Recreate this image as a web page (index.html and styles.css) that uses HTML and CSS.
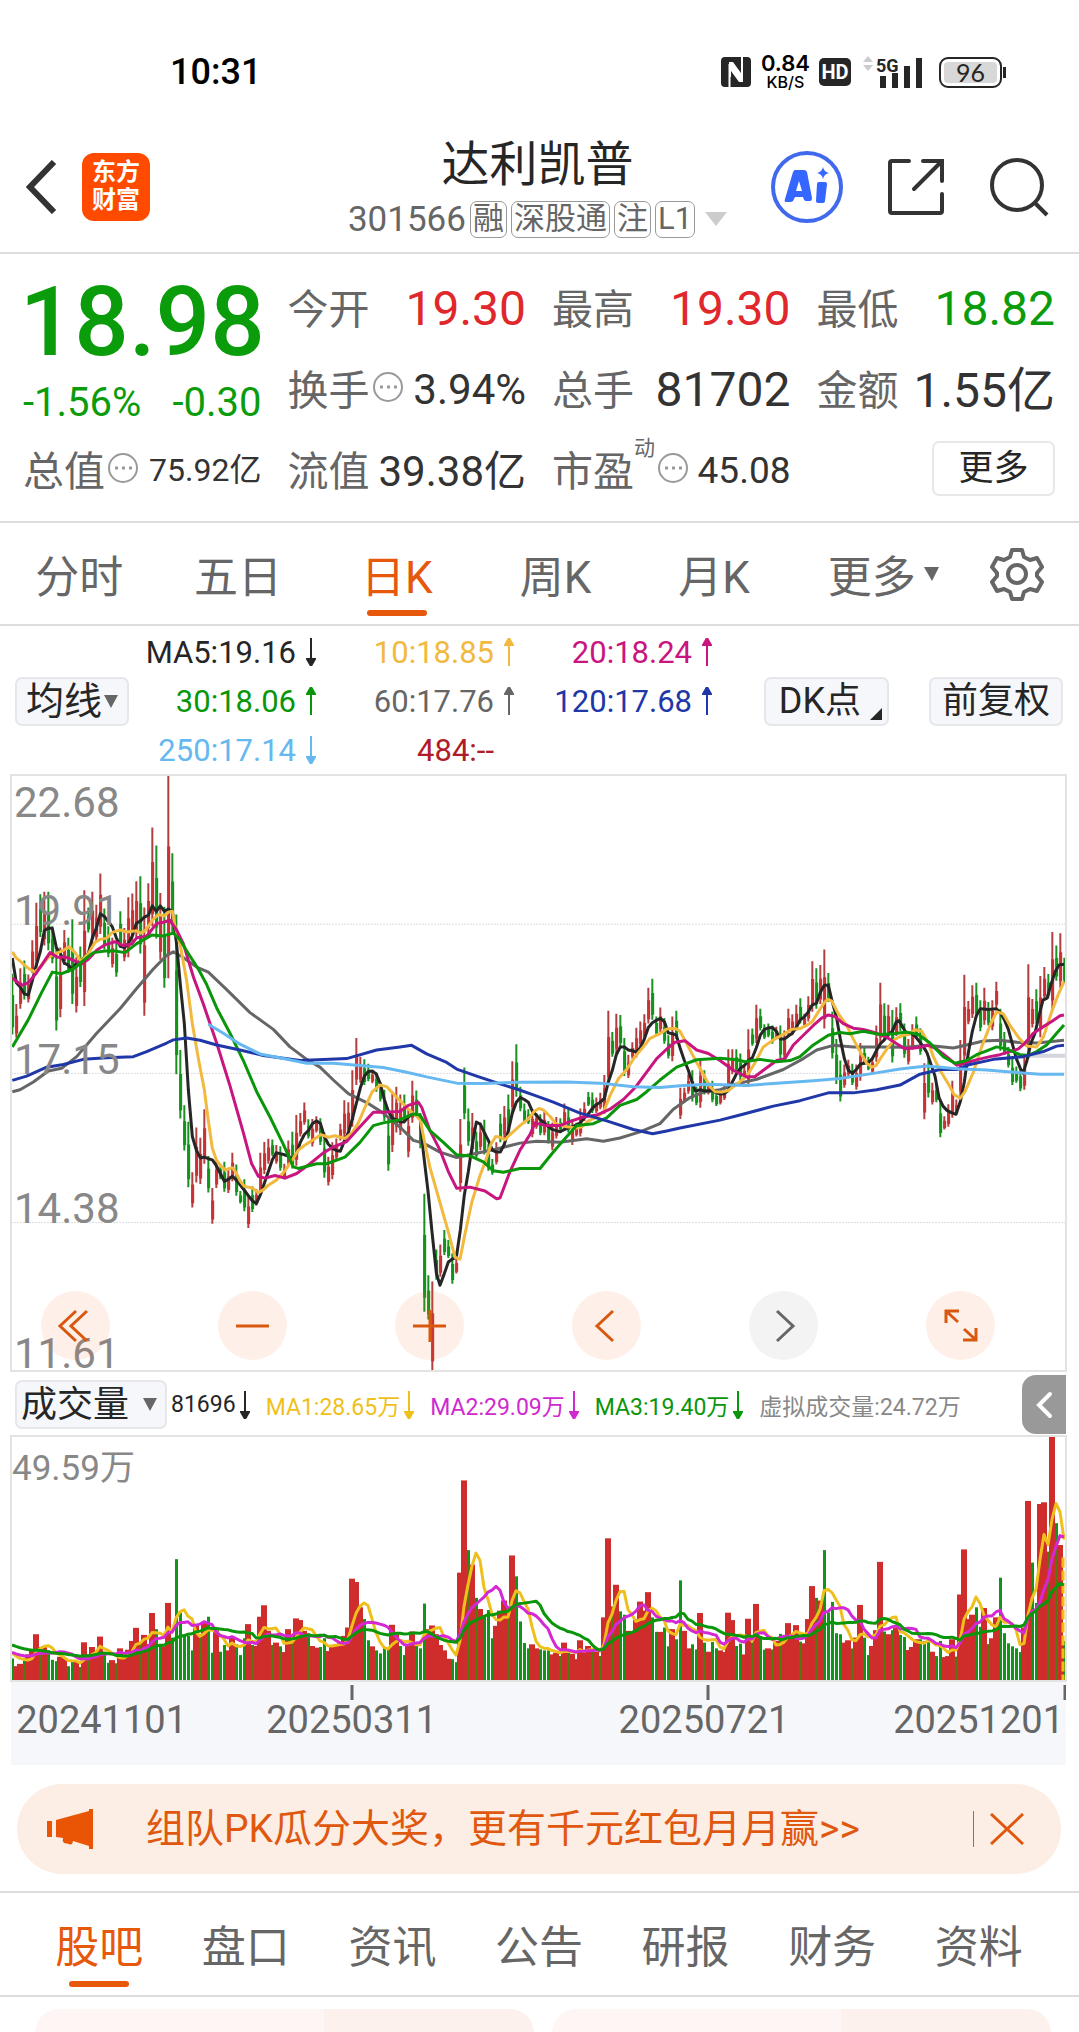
FILE: index.html
```html
<!DOCTYPE html>
<html lang="zh-CN">
<head>
<meta charset="utf-8">
<meta name="viewport" content="width=device-width, initial-scale=1">
<title>达利凯普 301566</title>
<link rel="stylesheet" href="styles.css">
</head>
<body>
<div class="status">
  <span class="clock">10:31</span>
  <div class="status-icons">
    <svg class="nfc" width="30" height="30" viewBox="0 0 30 30"><rect width="30" height="30" rx="4" fill="#262626"/><path d="M8.500 30V7M21 0v22" fill="none" stroke="#fff" stroke-width="2"/><path d="M8 5l4 0 8 11V11l2 0v14h-4L10 14v6H8z" fill="#fff"/></svg>
    <span class="speed"><b>0.84</b><small>KB/S</small></span>
    <span class="hd">HD</span>
    <svg class="signal" width="62" height="36" viewBox="0 0 62 36"><path d="M0 8l5-6 5 6zM0 11h10l-5 6z" fill="#ccc"/><text x="13" y="18" class="sig-text">5G</text><path d="M17 22h6v12h-6zM29 19h6v15h-6zM41 12h6v22h-6zM53 4h6v30h-6z" fill="#262626"/></svg>
    <span class="battery">96</span>
  </div>
</div>

<header class="header">
  <div class="head-left">
    <button class="plain" aria-label="返回"><svg width="31" height="54" viewBox="0 0 31 54"><path d="M28 2L4 27l24 25" fill="none" stroke="#333" stroke-width="6"/></svg></button>
    <a class="logo" href="#">东方<br>财富</a>
  </div>
  <div class="head-title">
    <h1>达利凯普</h1>
    <div class="code"><span>301566</span><i>融</i><i>深股通</i><i>注</i><i>L1</i><svg width="22" height="14" viewBox="0 0 22 14"><path d="M0 0h22L11 14z" fill="#ccc"/></svg></div>
  </div>
  <div class="head-right">
    <button class="plain" aria-label="AI"><svg width="72" height="72" viewBox="0 0 72 72"><circle cx="36" cy="36" r="34" fill="#fff" stroke="#4169ec" stroke-width="4"/><path fill="#3566ff" fill-rule="evenodd" d="M24 19h9q2 0 3 2l5 26q0 3-2 3h-4q-2 0-3-4h-8l-2 4q-1 1-3 1h-4q-2 0-1-3l8-27q1-2 2-2zM28 30l-3 10h6zM48 31h6q2 0 2 2l-2 17q0 2-2 2h-5q-2 0-2-2l1-17q0-2 2-2zM52 16q1 5 6 6-5 1-6 6-1-5-6-6 5-1 6-6z"/></svg></button>
    <button class="plain" aria-label="分享"><svg width="58" height="58" viewBox="0 0 58 58"><path d="M22 3H5q-2 0-2 2v48q0 2 2 2h48q2 0 2-2V36M36 3h19v20M55 3L27 31" fill="none" stroke="#333" stroke-width="4" stroke-linecap="round"/></svg></button>
    <button class="plain" aria-label="搜索"><svg width="60" height="60" viewBox="0 0 60 60"><circle cx="28" cy="28" r="25" fill="none" stroke="#333" stroke-width="4"/><path d="M46 46l12 12" stroke="#333" stroke-width="4"/></svg></button>
  </div>
</header>

<section class="quote">
  <div class="price-box green">
    <strong>18.98</strong>
    <div class="change"><span>-1.56%</span><span>-0.30</span></div>
  </div>
  <div class="item"><span>今开</span><b class="v48 red">19.30</b></div>
  <div class="item"><span>最高</span><b class="v48 red">19.30</b></div>
  <div class="item"><span>最低</span><b class="v48 green">18.82</b></div>
  <div class="item"><span>换手<svg class="dots" viewBox="0 0 32 32"><circle cx="16" cy="16" r="14"/><path d="M8 16h3M15 16h3M22 16h3"/></svg></span><b class="v42">3.94%</b></div>
  <div class="item"><span>总手</span><b class="v48">81702</b></div>
  <div class="item"><span>金额</span><b class="v48 cn">1.55亿</b></div>
  <div class="item"><span>总值<svg class="dots" viewBox="0 0 32 32"><circle cx="16" cy="16" r="14"/><path d="M8 16h3M15 16h3M22 16h3"/></svg></span><b class="v32 cn">75.92亿</b></div>
  <div class="item"><span>流值</span><b class="v42 cn">39.38亿</b></div>
  <div class="item"><span>市盈<sup>动</sup><svg class="dots" viewBox="0 0 32 32"><circle cx="16" cy="16" r="14"/><path d="M8 16h3M15 16h3M22 16h3"/></svg></span><b class="v37">45.08</b></div>
  <div class="item end"><button class="more">更多</button></div>
</section>

<nav class="period">
  <button>分时</button><button>五日</button><button class="on">日K</button><button>周K</button><button>月K</button>
  <button>更多<svg width="15" height="14" viewBox="0 0 15 14"><path d="M0 0h15L8 14z" fill="#666"/></svg></button>
  <button aria-label="设置"><svg width="54" height="54" viewBox="0 0 54 54" fill="none" stroke="#666" stroke-width="4"><path d="M22 3h10l2 7 6 3 7-2 5 9-5 6v3l5 6-5 9-7-2-6 3-2 7H22l-2-7-6-3-7 2-5-9 5-6v-3l-5-6 5-9 7 2 6-3z" stroke-linejoin="round"/><circle cx="27" cy="27" r="9"/></svg></button>
</nav>

<section class="legend">
  <button class="chip big">均线<svg width="14" height="13" viewBox="0 0 14 13"><path d="M0 0h14L7 13z" fill="#666"/></svg></button>
  <div class="ma-grid">
    <span class="c5">MA5:19.16<svg class="arr" viewBox="0 0 10 28"><path d="M5 0v28M1 21h8l-4 7z"/></svg></span>
    <span class="c10">10:18.85<svg class="arr" viewBox="0 0 10 28"><path d="M5 28V0M1 7h8L5 0z"/></svg></span>
    <span class="c20">20:18.24<svg class="arr" viewBox="0 0 10 28"><path d="M5 28V0M1 7h8L5 0z"/></svg></span>
    <span class="c30">30:18.06<svg class="arr" viewBox="0 0 10 28"><path d="M5 28V0M1 7h8L5 0z"/></svg></span>
    <span class="c60">60:17.76<svg class="arr" viewBox="0 0 10 28"><path d="M5 28V0M1 7h8L5 0z"/></svg></span>
    <span class="c120">120:17.68<svg class="arr" viewBox="0 0 10 28"><path d="M5 28V0M1 7h8L5 0z"/></svg></span>
    <span class="c250">250:17.14<svg class="arr" viewBox="0 0 10 28"><path d="M5 0v28M1 21h8l-4 7z"/></svg></span>
    <span class="c484">484:--<svg class="arr" viewBox="0 0 10 28"></svg></span>
  </div>
  <div class="legend-right">
    <button class="chip dk">DK点</button>
    <button class="chip">前复权</button>
  </div>
</section>

<section class="chart">
  <svg id="kline" viewBox="33 12 3165 1530" preserveAspectRatio="none"></svg>
  <div class="scale"><span>22.68</span><span>19.91</span><span>17.15</span><span>14.38</span><span>11.61</span></div>
  <div class="tools">
    <button aria-label="最左"><svg viewBox="0 0 69 69"><path d="M35 20L19 35l16 15M46 20L30 35l16 15"/></svg></button>
    <button aria-label="缩小"><svg viewBox="0 0 69 69"><path d="M18 35h33"/></svg></button>
    <button aria-label="放大"><svg viewBox="0 0 69 69"><path d="M18 35h33M35 19v32"/></svg></button>
    <button aria-label="左移"><svg viewBox="0 0 69 69"><path d="M41 20L25 35l16 15"/></svg></button>
    <button class="off" aria-label="右移"><svg viewBox="0 0 69 69"><path d="M28 20l16 15-16 15"/></svg></button>
    <button aria-label="全屏"><svg viewBox="0 0 69 69"><path d="M20 32V20h13M20 20l12 11M38 38l12 11M50 37v12H37"/></svg></button>
  </div>
</section>

<section class="vol-head">
  <button class="chip vol-btn">成交量<svg width="14" height="13" viewBox="0 0 14 13"><path d="M0 0h14L7 13z" fill="#666"/></svg></button>
  <div class="vol-ma">
    <span class="c5">81696<svg class="arr" viewBox="0 0 10 28"><path d="M5 0v28M1 21h8l-4 7z"/></svg></span>
    <span class="m1">MA1:28.65万<svg class="arr" viewBox="0 0 10 28"><path d="M5 0v28M1 21h8l-4 7z"/></svg></span>
    <span class="m2">MA2:29.09万<svg class="arr" viewBox="0 0 10 28"><path d="M5 0v28M1 21h8l-4 7z"/></svg></span>
    <span class="c30">MA3:19.40万<svg class="arr" viewBox="0 0 10 28"><path d="M5 0v28M1 21h8l-4 7z"/></svg></span>
    <span class="m4">虚拟成交量:24.72万</span>
  </div>
  <button class="fold" aria-label="展开"><svg width="18" height="28" viewBox="0 0 18 28"><path d="M15 3L4 14l11 11" fill="none" stroke="#fff" stroke-width="4" stroke-linecap="round"/></svg></button>
</section>

<section class="volume">
  <svg id="vol" viewBox="11 201 1055 728" preserveAspectRatio="none"></svg>
  <span class="vol-max">49.59万</span>
</section>
<div class="dates">
  <svg viewBox="0 0 1055 15" preserveAspectRatio="none"><path d="M341 0v15M697 0v15M1054 0v15" stroke="#666" stroke-width="3"/></svg>
  <div class="date-row"><span>20241101</span><span>20250311</span><span>20250721</span><span>20251201</span></div>
</div>

<aside class="banner">
  <svg width="46" height="40" viewBox="0 0 46 40"><path d="M0 12h5v16H0zM9 11L42 2V0h4v40h-4v-3l-16-5q-1 5-4 3l-5-1q-2-2-1-5l-7-1z" fill="#e95504"/></svg>
  <a href="#">组队PK瓜分大奖，更有千元红包月月赢&gt;&gt;</a>
  <button class="plain" aria-label="关闭"><svg width="34" height="32" viewBox="0 0 34 32"><path d="M1 1l32 30M33 1L1 31" stroke="#e0580f" stroke-width="3"/></svg></button>
</aside>

<nav class="tabs">
  <a href="#" class="on">股吧</a><a href="#">盘口</a><a href="#">资讯</a><a href="#">公告</a><a href="#">研报</a><a href="#">财务</a><a href="#">资料</a>
</nav>
<div class="cards"><div></div><div></div></div>
<script src="chart.js"></script>
</body>
</html>
```
FILE: styles.css
```css
* { box-sizing: border-box; }
body {
  margin: 0;
  background: #fff;
  color: #333;
  font-family: Roboto, "Noto Sans CJK SC", sans-serif;
  overflow-x: hidden;
}
button { font: inherit; color: inherit; border: 0; background: none; padding: 0; margin: 0; white-space: nowrap; }
a { color: inherit; text-decoration: none; }
svg { display: block; flex: none; }
.plain { display: flex; }
.green { color: #0a9c0a; }
.red { color: #e0282c; }

.status { display: flex; justify-content: space-between; align-items: center; height: 122px; padding: 22px 77px 0 170px; color: #000; }
.clock { font-size: 36px; font-weight: 500; }
.status-icons { display: flex; align-items: center; }
.speed { display: flex; flex-direction: column; align-items: center; margin: 0 9px 0 10px; font-family: Inter, sans-serif; }
.speed b { font-size: 22px; line-height: 21px; font-weight: 600; }
.speed small { font-size: 16px; line-height: 17px; font-weight: 500; }
.hd { width: 32px; height: 28px; border-radius: 5px; background: #262626; color: #fff; font-size: 20px; line-height: 28px; font-weight: 700; text-align: center; margin-right: 12px; }
.sig-text { font-size: 18px; font-weight: 700; fill: #262626; }
.battery { position: relative; width: 63px; height: 31px; margin-left: 14px; border: 2px solid #262626; border-radius: 9px; background: #d8d8d8; box-shadow: inset 0 0 0 3px #fff; color: #262626; font-family: Lato, sans-serif; font-size: 25px; line-height: 27px; text-align: center; }
.battery::after { content: ""; position: absolute; right: -6px; top: 8px; width: 3px; height: 11px; background: #262626; }

.header { display: grid; grid-template-columns: 1fr auto 1fr; align-items: center; height: 132px; padding: 0 30px 0 26px; border-bottom: 2px solid #ddd; }
.head-left { display: flex; align-items: center; gap: 25px; }
.logo { width: 68px; height: 68px; border-radius: 12px; background: #ff4a00; color: #fff; font-size: 24px; line-height: 28px; font-weight: 700; text-align: center; padding-top: 5px; }
.head-title { text-align: center; padding-top: 4px; }
h1 { margin: 0; font-size: 48px; line-height: 60px; font-weight: 400; color: #262626; }
.code { display: flex; align-items: center; justify-content: center; gap: 4px; height: 49px; color: #666; font-size: 35px; }
.code i { font-style: normal; font-size: 31px; line-height: 33px; height: 37px; padding: 0 2px; border: 1px solid #999; border-radius: 7px; }
.code svg { margin-left: 6px; }
.head-right { display: flex; align-items: center; justify-content: flex-end; gap: 44px; }

.quote { display: grid; grid-template-columns: repeat(4, minmax(0, 1fr)); grid-auto-rows: 81px; column-gap: 26px; padding: 14px 24px 10px 23px; border-bottom: 2px solid #ddd; }
.price-box { grid-row: span 2; display: flex; flex-direction: column; align-items: center; white-space: nowrap; }
.price-box strong { font-size: 96px; line-height: 108px; font-weight: 500; }
.change { display: flex; justify-content: space-between; align-self: stretch; font-size: 40px; line-height: 54px; }
.item { display: flex; align-items: center; justify-content: space-between; white-space: nowrap; }
.item span { display: flex; align-items: center; font-size: 41px; color: #666; padding-bottom: 5px; }
.item b { font-weight: 400; }
.item .cn { padding-bottom: 7px; }
.item sup { align-self: flex-start; font-size: 21px; line-height: 21px; }
.v48 { font-size: 48px; }
.v42 { font-size: 42px; }
.v37 { font-size: 37px; }
.v32 { font-size: 32px; }
.dots { width: 32px; height: 32px; margin: 0 2px; fill: none; stroke: #999; stroke-width: 2; }
.dots path { stroke-width: 3; }
.item.end { justify-content: flex-end; }
.more { width: 123px; height: 55px; border: 2px solid #e8e8e8; border-radius: 7px; font-size: 35px; line-height: 46px; color: #262626; margin-bottom: 4px; }

.period { display: grid; grid-template-columns: repeat(5, 159fr) 180fr 88fr; height: 103px; padding: 0 18px 0 0; border-bottom: 2px solid #ddd; font-size: 44px; color: #666; }
.period button { position: relative; display: flex; align-items: center; justify-content: center; gap: 8px; }
.period .on, .tabs .on { color: #e6580c; }
.on::after { content: ""; position: absolute; left: 50%; bottom: 8px; width: 60px; height: 6px; margin-left: -30px; border-radius: 3px; background: #e6580c; }

.legend { display: flex; align-items: center; padding: 1px 16px 0 15px; height: 149px; }
.chip { position: relative; display: flex; align-items: center; justify-content: center; height: 49px; border: 2px solid #e6e7ea; border-radius: 7px; background: #f6f7fa; color: #262626; font-size: 36px; line-height: 44px; padding: 0 11px; }
.chip.big { width: 114px; gap: 2px; font-size: 38px; padding: 0; }
.chip.dk { padding: 0 26px 0 13px; }
.chip.dk::after { content: ""; position: absolute; right: 5px; bottom: 4px; border: 6px solid; border-color: transparent #262626 #262626 transparent; }
.ma-grid { display: grid; grid-template-columns: 187px 198px 198px; grid-auto-rows: 49px; font-size: 31px; }
.ma-grid span, .vol-ma span { display: flex; align-items: center; justify-content: flex-end; white-space: nowrap; }
.arr { width: 10px; height: 28px; margin-left: 10px; stroke: currentColor; fill: currentColor; stroke-width: 2; }
.legend-right { display: flex; gap: 40px; margin-left: auto; }
.c5 { color: #262626; }
.c10 { color: #f2b93f; }
.c20 { color: #c9157f; }
.c30 { color: #0a960a; }
.c60 { color: #666; }
.c120 { color: #2037a8; }
.c250 { color: #66b8f0; }
.c484 { color: #b01c28; }

.chart, .volume { position: relative; margin: 0 13px 0 11px; }
#kline, #vol { width: 100%; outline: 2px solid #e3e3e3; outline-offset: -1px; }
#kline { height: 596px; }
#kline path, #vol path { fill: none; vector-effect: non-scaling-stroke; stroke-linejoin: round; }
.scale { position: absolute; inset: 0; display: grid; grid-template-rows: 43px 108px 149px 149px 145px; align-items: end; padding-left: 3px; color: #888; font-size: 42px; line-height: 30px; pointer-events: none; }
.tools { position: absolute; left: 30px; right: 71px; bottom: 11px; display: flex; justify-content: space-between; }
.tools button { width: 69px; height: 69px; border-radius: 50%; background: rgba(250, 110, 40, .1); }
.tools .off { background: rgba(100, 100, 100, .08); }
.tools path { fill: none; stroke: #d9580f; stroke-width: 3; }
.tools .off path { stroke: #666; }

.vol-head { display: flex; align-items: center; height: 65px; margin: 0 13px 0 15px; padding-top: 2px; }
.vol-btn { width: 152px; gap: 14px; padding: 0 4px 0 0; }
.vol-ma { display: flex; gap: 16px; margin-left: 4px; font-size: 23px; }
.vol-ma .arr { margin-left: 4px; }
.m1 { color: #efc01c; }
.m2 { color: #cf2ad0; }
.m4 { color: #888; }
.fold { display: flex; align-items: center; justify-content: center; width: 44px; height: 59px; margin-left: auto; border-radius: 14px 0 0 14px; background: #999; }
#vol { height: 245px; }
.vol-max { position: absolute; left: 1px; top: 13px; color: #888; font-size: 35px; line-height: 40px; }
.dates { margin: 0 13px 0 11px; padding-top: 4px; height: 84px; background: #f6f7fa; color: #666; font-size: 38px; }
.dates svg { width: 100%; height: 15px; }
.date-row { display: grid; grid-template-columns: 175fr 330fr 382fr 168fr; line-height: 40px; padding-left: 4px; }
.date-row span { justify-self: center; }
.date-row span:last-child { justify-self: end; margin-right: 2px; }

.banner { display: flex; align-items: center; height: 90px; margin: 19px 18px 17px 17px; padding: 0 37px 0 30px; border-radius: 45px; background: #fceee4; color: #e0580f; font-size: 39px; }
.banner a { margin-left: 53px; white-space: nowrap; line-height: 50px; }
.banner .plain { margin-left: auto; padding: 2px 0 2px 16px; border-left: 1px solid #e0580f; }

.tabs { display: grid; grid-template-columns: repeat(7, 1fr); height: 106px; padding: 0 27px 0 26px; border-top: 2px solid #ddd; border-bottom: 2px solid #ddd; font-size: 44px; color: #666; }
.tabs a { position: relative; display: flex; align-items: center; justify-content: center; }
.cards { display: grid; grid-template-columns: 1fr 1fr; gap: 18px; height: 24px; margin-top: 12px; padding: 0 28px 0 35px; overflow: hidden; }
.cards div { border-radius: 24px 24px 0 0; background: linear-gradient(90deg, #fef6f4 58%, #fdf1ee 58%); }
```
FILE: chart.js
```js
// Daily bars: r = up, g = down, then high-low on the plot's vertical scale.
const DAYS = `g522-678 r600-686 r508-612 g488-588 r524-596 r436-520 r340-510 g318-428 r312-450 g312-462 g400-495 g455-668 r455-634 r410-500 g430-520 g382-600 r480-622 g452-556 r308-605 g352-416
r312-450 r345-440 r265-420 g355-460 g400-480 r430-506 g440-530 g362-455 r405-490 r326-480 r316-440 r285-430 g272-470 r352-630 r290-420 r147-400 g193-432 r315-486 g350-558 r13-534
g213-420 g370-780 g718-894 g860-976 g902-1070 r1032-1122 r917-1058 r943-1062 r870-1010 g990-1084 r1072-1164 r1000-1072 g1010-1050 g1005-1082 r1020-1085 r982-1055 g1012-1092 g1080-1112 g1050-1132 r1090-1175
g1068-1134 r1075-1118 r982-1090 r954-1036 r946-1010 g948-990 r962-1010 g965-1028 r1010-1050 r950-1015 g928-1022 r885-1015 r880-940 r853-910 g896-945 r895-966 r888-930 g893-962 g930-1046 r992-1066
r955-1050 r945-1000 r907-950 r847-945 r852-930 r770-915 r687-808 r735-802 g742-808 g753-798 r770-803 g775-825 g800-850 g820-900 g890-1028 r830-980 r812-930 r832-936 g832-905 r870-993
r797-905 g822-890 g880-970 g1087-1390 g1296-1410 r1312-1545 g1230-1308 r1217-1300 g1180-1244 g1206-1252 g1240-1318 r1250-1292 r895-1082 g763-896 g868-964 r880-985 g928-998 r905-975 g897-986 g960-1028
g998-1038 r955-1012 g882-955 r862-945 g832-940 r747-880 g703-838 g812-875 g855-907 g870-908 r870-942 r880-920 g883-937 r875-937 g900-958 r905-975 r890-945 g893-925 r855-920 g870-930
r895-962 r905-940 r868-940 r852-900 g826-862 g827-880 r840-880 r828-870 r782-882 r617-810 g672-735 r625-727 g628-710 g687-785 r730-790 r698-740 r661-737 r645-710 r626-690 r558-650
g535-640 g632-680 r609-672 g636-702 g680-740 r632-747 g617-690 r815-895 r815-852 r780-830 g770-850 g812-860 r740-866 g770-832 r800-832 g797-852 g822-862 r820-858 r810-846 r716-822
r716-780 g716-775 g727-795 r760-792 r665-812 g663-707 r602-700 g612-668 g652-690 g650-685 g655-702 r658-690 g655-740 r668-740 r612-680 r626-680 r602-668 g585-650 r625-657 r580-645
r490-620 g508-612 r500-600 r460-663 g520-595 g620-740 g690-805 g745-850 r755-815 r743-785 g753-808 r755-820 r700-797 g710-755 g735-770 r735-778 r655-748 r545-705 g598-690 r602-685
g615-750 r608-682 g598-670 g650-738 r690-755 r652-717 g632-690 g662-730 r752-896 g738-840 r802-858 g805-852 g848-942 r888-922 r857-915 r797-892 r845-885 r692-842 r525-760 r592-652
r552-636 g545-635 g590-670 r558-653 g595-655 r590-667 r543-610 g612-720 g672-730 g710-763 g740-808 g760-802 g765-824 r735-820 r498-740 r587-660 g562-650 r528-685 r505-590 g523-585
r415-615 g450-540 r418-558 g481-545`.split(/\s+/);

const LINES = [
  ['#666', '37,825 60,820 100,800 145,772 185,765 230,735 290,675 360,612 410,560 460,510 500,475 520,466 545,478 590,505 625,518 680,563 750,622 820,665 870,710 920,742 960,762 1000,795 1045,830 1100,853 1150,880 1205,920 1240,950 1270,957 1320,980 1370,994 1430,983 1490,972 1560,957 1610,952 1680,955 1760,946 1810,952 1860,944 1920,928 1980,907 2020,870 2070,840 2110,826 2160,820 2210,805 2270,793 2350,768 2410,740 2450,718 2500,706 2560,710 2640,710 2720,711 2780,706 2860,713 2900,705 2950,695 3000,693 3060,699 3110,700 3192,693'],
  ['#262626', '37,482 49,545 61,556 73,574 85,577 97,540 109,500 121,465 133,412 145,405 157,406 169,455 181,470 193,495 205,500 217,512 229,495 241,490 253,480 265,470 277,430 289,405 301,368 313,375 325,388 337,402 349,430 361,452 373,455 385,445 397,425 409,393 421,387 433,377 445,372 457,348 469,362 481,348 493,362 505,356 517,362 529,440 541,550 553,650 565,820 577,940 589,975 601,995 613,993 625,997 637,1000 649,1015 661,1035 673,1055 685,1050 697,1042 709,1052 721,1065 733,1078 745,1092 757,1105 769,1112 781,1090 793,1060 805,1030 817,1000 829,982 841,984 853,987 865,990 877,998 889,985 901,955 913,935 925,925 937,907 949,900 961,906 973,940 985,960 997,970 1009,976 1021,978 1033,952 1045,930 1057,895 1069,855 1081,815 1093,785 1105,773 1117,772 1129,780 1141,805 1153,845 1165,875 1177,893 1200,902 1212,903 1225,890 1237,882 1249,885 1261,895 1270,980 1284,1080 1296,1185 1309,1290 1320,1322 1333,1292 1345,1262 1358,1254 1369,1250 1381,1180 1393,1090 1405,1030 1417,960 1429,903 1441,908 1453,930 1465,950 1477,975 1489,980 1501,980 1513,960 1525,925 1537,880 1549,852 1561,840 1573,845 1585,852 1597,875 1609,885 1621,897 1633,905 1645,915 1657,922 1669,925 1681,928 1693,922 1705,918 1717,915 1729,910 1741,905 1753,892 1765,882 1777,868 1789,858 1801,852 1813,842 1825,800 1837,770 1849,730 1861,710 1873,710 1885,718 1897,720 1909,723 1921,712 1933,690 1945,660 1957,648 1969,642 1981,637 1993,645 2005,674 2017,676 2029,680 2041,715 2053,745 2065,770 2077,802 2086,823 2101,820 2113,823 2137,822 2149,828 2161,831 2173,830 2185,822 2197,800 2209,780 2221,765 2233,758 2245,745 2257,738 2269,712 2281,680 2293,665 2305,661 2317,660 2329,670 2341,690 2353,690 2365,682 2377,675 2389,660 2401,640 2413,633 2425,620 2437,602 2449,598 2461,570 2473,552 2485,552 2497,595 2509,632 2521,690 2533,740 2545,770 2557,778 2569,768 2581,754 2593,752 2605,750 2617,740 2629,720 2641,702 2653,692 2665,678 2677,670 2689,645 2697,643 2709,660 2721,678 2733,675 2745,682 2757,695 2769,708 2781,725 2793,755 2805,785 2817,840 2829,862 2841,873 2857,880 2868,883 2881,850 2893,800 2905,725 2917,670 2929,630 2941,612 2965,614 2989,612 3001,622 3013,640 3025,665 3037,702 3049,740 3061,765 3069,778 3081,745 3093,700 3105,675 3117,630 3129,590 3141,585 3153,550 3165,518 3177,500 3192,498'],
  ['#f2b93f', '37,466 49,482 61,490 73,500 85,508 103,518 121,505 145,480 169,470 190,462 208,453 225,468 243,490 265,470 285,442 300,434 320,431 337,416 361,410 380,415 409,412 421,418 435,412 457,385 475,370 493,374 505,364 517,362 525,400 541,450 560,540 577,650 595,740 613,820 625,900 637,970 649,1000 661,1015 677,1026 697,1020 709,1034 721,1055 733,1068 757,1072 775,1084 793,1075 805,1065 829,1052 853,1030 877,1000 895,975 913,963 937,950 963,935 985,942 1005,938 1035,945 1057,930 1075,905 1095,865 1117,825 1140,808 1160,812 1185,835 1205,852 1225,870 1249,888 1261,898 1275,960 1290,1020 1320,1110 1345,1185 1365,1250 1380,1255 1395,1190 1415,1110 1440,1040 1458,1000 1473,960 1487,940 1500,942 1515,948 1530,935 1560,912 1585,895 1603,875 1617,868 1630,872 1650,888 1668,908 1700,915 1730,918 1745,915 1765,900 1790,890 1810,878 1830,835 1855,792 1880,768 1905,735 1930,710 1950,688 1980,676 2000,664 2025,662 2040,670 2065,710 2090,750 2110,780 2130,812 2145,825 2165,826 2185,822 2210,806 2240,785 2262,755 2290,710 2320,692 2350,678 2375,665 2400,663 2420,655 2437,645 2455,620 2470,600 2482,588 2495,592 2515,625 2540,655 2560,690 2580,722 2600,752 2615,762 2628,758 2645,735 2665,710 2685,690 2710,680 2725,678 2745,666 2765,670 2785,700 2800,735 2820,770 2845,805 2862,832 2880,842 2895,825 2920,775 2945,710 2970,655 2990,620 3010,625 3030,655 3055,685 3080,708 3110,710 3130,685 3155,620 3175,575 3192,543'],
  ['#c9157f', '37,533 65,552 85,545 105,525 125,500 150,468 172,480 200,480 225,490 245,497 265,485 290,462 315,448 345,440 370,450 395,446 410,430 440,426 470,393 490,390 510,385 530,410 550,445 580,530 610,600 650,700 690,810 730,930 755,1010 775,1042 795,1047 825,1040 855,1047 890,1035 930,1010 970,982 1000,967 1040,953 1080,915 1120,878 1150,878 1200,876 1225,860 1255,852 1265,865 1290,925 1320,975 1345,1030 1370,1073 1410,1070 1455,1080 1490,1100 1500,1098 1530,1030 1560,975 1590,935 1605,905 1640,912 1680,912 1715,900 1750,890 1790,885 1830,870 1870,845 1905,815 1940,775 1970,740 2005,712 2025,698 2055,694 2090,718 2125,727 2160,745 2200,770 2240,787 2265,786 2290,770 2330,745 2355,740 2380,705 2410,680 2440,655 2465,636 2485,628 2505,632 2530,650 2560,662 2590,665 2620,672 2660,685 2690,702 2715,715 2750,712 2785,706 2810,715 2840,735 2870,757 2900,750 2935,742 2970,735 3000,730 3030,722 3055,715 3075,700 3100,675 3130,658 3155,645 3180,630 3192,628'],
  ['#0a960a', '37,710 85,640 125,570 157,518 185,522 220,510 245,492 280,468 315,464 345,464 375,468 410,445 455,423 490,425 520,418 540,435 565,470 595,510 620,550 650,610 690,675 730,745 770,825 810,890 850,960 880,1018 895,1022 950,1010 980,1010 1035,993 1080,955 1120,912 1150,905 1200,897 1240,882 1260,885 1290,925 1330,955 1370,987 1410,990 1450,1005 1480,1028 1510,1032 1560,1022 1620,1022 1655,985 1690,950 1730,912 1780,907 1820,892 1860,860 1910,845 1940,825 1980,795 2030,762 2090,743 2160,739 2210,743 2235,748 2280,742 2330,748 2370,745 2400,735 2440,705 2485,680 2520,673 2550,676 2590,670 2640,678 2680,676 2720,672 2755,678 2790,700 2830,735 2865,752 2900,745 2930,730 2960,720 2990,710 3020,715 3060,730 3085,732 3110,722 3140,705 3170,675 3192,654'],
  ['#2037a8', '37,796 80,785 140,762 190,755 250,742 320,738 400,735 440,722 500,700 520,692 560,687 600,693 650,705 720,718 790,732 900,745 1040,740 1130,718 1200,710 1235,706 1280,728 1340,750 1370,767 1430,785 1500,805 1550,818 1600,833 1660,852 1740,880 1820,900 1900,922 1958,933 2000,926 2040,918 2160,898 2220,885 2320,862 2400,848 2485,828 2560,828 2630,820 2700,808 2760,780 2820,768 2870,768 2910,755 2980,742 3070,735 3130,722 3170,708 3192,706'],
  ['#66b8f0', '625,652 670,675 720,703 780,728 850,740 920,752 1000,752 1080,758 1150,763 1220,775 1280,787 1370,803 1450,804 1550,801 1700,800 1800,803 1900,812 1980,814 2040,810 2120,806 2240,809 2320,804 2440,797 2520,791 2620,778 2700,767 2780,759 2870,766 2960,769 3040,775 3120,780 3192,780']
];

// Volume bars, same order: direction and the top edge of the bar.
const VOLUME = `g862 r885 r878 g860 r850 r838 r790 g828 r826 g838 g866 g870 r857 r862 g885 g870 r872 g888 r814 g850 r828 r840 r797 g850 g875 r867 g877 r832 r852 r836
r810 r771 g815 r792 g820 r727 g775 g820 r826 r697 g800 g567 g727 g795 g795 g838 r764 g790 r755 g738 g845 r778 g842 g822 r838 r800 g820 g852 g802 r760
g822 r825 r738 r704 r780 g822 r815 g826 r843 r775 g810 r743 r748 r780 g787 r825 r830 g828 g802 r840 r825 r820 r815 r795 r770 r625 r635 r710 g745 g808
r826 g838 g847 g828 g832 r762 r790 g825 g852 r825 r782 g820 g832 g699 r775 r764 r790 r822 r838 r863 g864 g873 r607 r333 g540 r583 g682 r715 g735 g718
g802 r765 r720 r690 g720 r556 g618 g752 g816 g832 r820 r832 g835 g838 g838 r850 r845 g855 r815 g842 r848 r864 r808 r842 r825 g838 r842 g855 r740 r505
g708 r643 g722 g732 r780 r782 r745 r693 r720 r665 g740 g783 r783 g770 g826 r775 g805 g630 r780 r832 g820 g835 r727 g815 r842 g813 g832 r838 r843 r726
r748 g825 g818 r850 r744 g815 r700 g795 g836 r832 g836 r810 g789 r800 r757 r800 r763 g812 r817 r745 r647 g682 r690 g540 g725 g694 g787 g790 r815 r808
g833 r800 r703 g800 g852 r825 r778 r575 g782 r790 g778 r770 g792 g798 r837 r828 r805 g805 g810 g800 r842 g855 g810 r858 r855 r805 g857 r672 r538 r745
r732 g710 g768 r712 g820 r802 r740 g622 g787 g817 g826 g832 g843 r770 r394 g577 g697 r403 r398 g545 r202 g460 r525 g810`.split(/\s+/);

const NS = 'http://www.w3.org/2000/svg';
function path(svg, d, color, width, dash) {
  const p = document.createElementNS(NS, 'path');
  p.setAttribute('d', d);
  p.setAttribute('stroke', color);
  p.setAttribute('stroke-width', width);
  if (dash) p.setAttribute('stroke-dasharray', dash);
  svg.appendChild(p);
}

const kline = document.getElementById('kline');
path(kline, 'M33 395H3198M33 778H3198M33 1161H3198', '#ddd', 1, '2 1');
path(kline, 'M3050 733H3198', '#d3d6dc', 4);
const wick = { r: '', g: '' };
const body = { r: '', g: '' };
DAYS.forEach((day, i) => {
  const [top, low] = day.slice(1).split('-').map(Number);
  const x = 37 + 12 * i;
  const span = low - top;
  wick[day[0]] += `M${x} ${top}V${low}`;
  body[day[0]] += `M${x + 1} ${top + span * 0.35}V${low - span * 0.12}`;
});
path(kline, wick.r, '#b04040', 2);
path(kline, body.r, '#c83232', 3);
path(kline, wick.g, '#1a9020', 2);
path(kline, body.g, '#12941a', 3);
LINES.forEach(([color, points]) => path(kline, 'M' + points.replace(/ /g, 'L'), color, 3));

const vol = document.getElementById('vol');
const BASE = 929;
function rect(x, y, w, color) {
  const r = document.createElementNS(NS, 'rect');
  r.setAttribute('x', x);
  r.setAttribute('y', y);
  r.setAttribute('width', w);
  r.setAttribute('height', BASE - y);
  r.setAttribute('fill', color);
  vol.appendChild(r);
}
const bars = VOLUME.map(v => ({ up: v[0] === 'r', y: Number(v.slice(1)) }));
bars.forEach((b, i) => { if (b.up) rect(9 + 4 * i, b.y, 6, '#cf2c2c'); });
bars.forEach((b, i) => {
  if (b.up) return;
  const x = 11 + 4 * i;
  rect(x, b.y, 3, '#12941a');
  const near = [bars[i - 1], bars[i + 1]].filter(n => n && n.up).map(n => n.y);
  if (near.length === 2) rect(x, Math.max(b.y, ...near), 3, '#53760f');
});
path(vol, 'M1063 562V929', '#fbb80f', 3, '10 3');

// Moving averages; the days before the window are taken as quiet ones.
const before = Array(10).fill(800).concat(Array(9).fill(842));
const series = before.concat(bars.map(b => b.y));
[[5, '#efc01c'], [10, '#d428d4'], [20, '#0a960a']].forEach(([n, color]) => {
  const pts = bars.map((b, i) => {
    const end = i + before.length + 1;
    const sum = series.slice(end - n, end).reduce((a, c) => a + c, 0);
    return `${12 + 4 * i} ${sum / n}`;
  });
  path(vol, 'M' + pts.join('L'), color, 3);
});
```
